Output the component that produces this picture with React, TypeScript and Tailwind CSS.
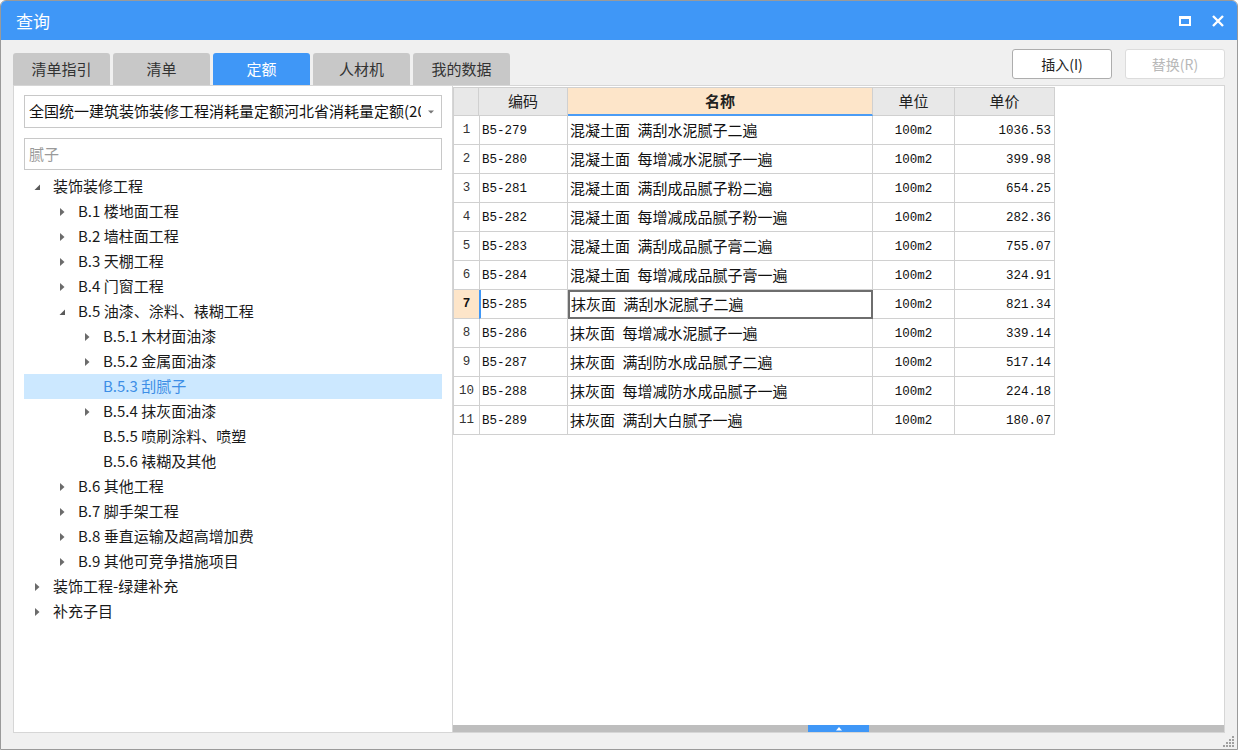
import React from 'react';

const cjk = { fontFamily: '"Noto Sans CJK SC", "Noto Sans", sans-serif' };
const mono = { fontFamily: '"Liberation Mono", "Noto Sans CJK SC", monospace' };

type Node = { label: string; level: number; arrow: 'open' | 'closed' | 'none'; selected?: boolean };

const tree: Node[] = [
  { label: '装饰装修工程', level: 0, arrow: 'open' },
  { label: 'B.1 楼地面工程', level: 1, arrow: 'closed' },
  { label: 'B.2 墙柱面工程', level: 1, arrow: 'closed' },
  { label: 'B.3 天棚工程', level: 1, arrow: 'closed' },
  { label: 'B.4 门窗工程', level: 1, arrow: 'closed' },
  { label: 'B.5 油漆、涂料、裱糊工程', level: 1, arrow: 'open' },
  { label: 'B.5.1 木材面油漆', level: 2, arrow: 'closed' },
  { label: 'B.5.2 金属面油漆', level: 2, arrow: 'closed' },
  { label: 'B.5.3 刮腻子', level: 2, arrow: 'none', selected: true },
  { label: 'B.5.4 抹灰面油漆', level: 2, arrow: 'closed' },
  { label: 'B.5.5 喷刷涂料、喷塑', level: 2, arrow: 'none' },
  { label: 'B.5.6 裱糊及其他', level: 2, arrow: 'none' },
  { label: 'B.6 其他工程', level: 1, arrow: 'closed' },
  { label: 'B.7 脚手架工程', level: 1, arrow: 'closed' },
  { label: 'B.8 垂直运输及超高增加费', level: 1, arrow: 'closed' },
  { label: 'B.9 其他可竞争措施项目', level: 1, arrow: 'closed' },
  { label: '装饰工程-绿建补充', level: 0, arrow: 'closed' },
  { label: '补充子目', level: 0, arrow: 'closed' },
];

const indent = ['pl-0', 'pl-[25px]', 'pl-[50px]'];

const rows = [
  ['B5-279', '混凝土面\u2002满刮水泥腻子二遍', '1036.53'],
  ['B5-280', '混凝土面\u2002每增减水泥腻子一遍', '399.98'],
  ['B5-281', '混凝土面\u2002满刮成品腻子粉二遍', '654.25'],
  ['B5-282', '混凝土面\u2002每增减成品腻子粉一遍', '282.36'],
  ['B5-283', '混凝土面\u2002满刮成品腻子膏二遍', '755.07'],
  ['B5-284', '混凝土面\u2002每增减成品腻子膏一遍', '324.91'],
  ['B5-285', '抹灰面\u2002满刮水泥腻子二遍', '821.34'],
  ['B5-286', '抹灰面\u2002每增减水泥腻子一遍', '339.14'],
  ['B5-287', '抹灰面\u2002满刮防水成品腻子二遍', '517.14'],
  ['B5-288', '抹灰面\u2002每增减防水成品腻子一遍', '224.18'],
  ['B5-289', '抹灰面\u2002满刮大白腻子一遍', '180.07'],
];

function Arrow({ kind }: { kind: Node['arrow'] }) {
  if (kind === 'closed')
    return (
      <svg width="8" height="10" viewBox="0 0 8 10">
        <path d="M2 1 L6.5 5 L2 9 Z" fill="#6b6b6b" />
      </svg>
    );
  if (kind === 'open')
    return (
      <svg width="8" height="10" viewBox="0 0 8 10">
        <path d="M7 2.5 L7 8 L1.5 8 Z" fill="#5a5a5a" />
      </svg>
    );
  return <span className="w-[8px]" />;
}

function Tab({ label, active }: { label: string; active?: boolean }) {
  return (
    <div
      className={
        active
          ? 'w-[97px] h-[32px] flex items-center justify-center rounded-t-[3px] bg-[#3f97f7] text-white text-[15px]'
          : 'w-[97px] h-[32px] flex items-center justify-center rounded-t-[3px] bg-[#c8c8c8] text-[#333] text-[15px]'
      }
    >
      {label}
    </div>
  );
}

export default function App() {
  return (
    <div
      className="w-[1238px] h-[750px] flex flex-col bg-[#f0f0f0] border border-[#9a9a9a] rounded-t-[6px] overflow-hidden"
      style={cjk}
    >
      {/* title bar */}
      <div className="h-[39px] shrink-0 bg-[#3f97f7] flex items-center pl-[15px] pr-[10px]">
        <span className="text-white text-[17px]">查询</span>
        <div className="ml-auto flex items-center gap-[20px]">
          <div className="w-[12px] h-[10px] border-2 border-t-[3px] border-white" />
          <svg width="14" height="14" viewBox="0 0 14 14" className="mr-[2px]">
            <path d="M2 2 L12 12 M12 2 L2 12" stroke="white" strokeWidth="2.4" />
          </svg>
        </div>
      </div>

      {/* tab row */}
      <div className="mt-[9px] h-[36px] shrink-0 flex items-end pl-[12px] pr-[12px]">
        <div className="flex gap-[3px]">
          <Tab label="清单指引" />
          <Tab label="清单" />
          <Tab label="定额" active />
          <Tab label="人材机" />
          <Tab label="我的数据" />
        </div>
        <div className="ml-auto self-start flex gap-[13px]">
          <div className="w-[100px] h-[30px] bg-white border border-[#adadad] rounded-[3px] flex items-center justify-center text-[14px] text-[#222]">
            插入(I)
          </div>
          <div className="w-[100px] h-[30px] bg-white border border-[#dcdcdc] rounded-[3px] flex items-center justify-center text-[14px] text-[#b8b8b8]">
            替换(R)
          </div>
        </div>
      </div>

      {/* main */}
      <div className="h-[648px] shrink-0 mx-[12px] flex">
        {/* left */}
        <div className="w-[440px] bg-white border border-[#d6d6d6] flex flex-col px-[10px] pt-[9px]">
          <div className="h-[33px] border border-[#c8c8c8] flex items-center pl-[4px] pr-[6px] overflow-hidden">
            <span className="text-[15px] text-[#111] whitespace-nowrap overflow-hidden w-[392px]">
              全国统一建筑装饰装修工程消耗量定额河北省消耗量定额(20
            </span>
            <svg width="8" height="6" viewBox="0 0 8 6" className="ml-auto">
              <path d="M1 1.5 L7 1.5 L4 4.5 Z" fill="#777" />
            </svg>
          </div>
          <div className="mt-[10px] h-[32px] border border-[#c8c8c8] flex items-center pl-[4px]">
            <span className="text-[15px] text-[#9a9a9a]">腻子</span>
          </div>
          <div className="mt-[4px] flex flex-col">
            {tree.map((n, i) => (
              <div
                key={i}
                className={
                  n.selected
                    ? 'h-[25px] flex items-center bg-[#cce8ff] text-[#3d8ee6]'
                    : 'h-[25px] flex items-center text-[#1a1a1a]'
                }
              >
                <div className={`${indent[n.level]} flex items-center`}>
                  <span className="w-[8px] ml-[9px] flex items-center">
                    <Arrow kind={n.arrow} />
                  </span>
                  <span className="ml-[12px] text-[15px] whitespace-nowrap">{n.label}</span>
                </div>
              </div>
            ))}
          </div>
        </div>

        {/* right */}
        <div className="flex-1 bg-white border border-l-0 border-[#d6d6d6] flex flex-col">
          <div className="pt-[1px] flex-1">
            <div className="flex h-[29px] text-[15px] text-[#222]">
              <div className="w-[26px] bg-[#e8e8e8] border border-[#d0d0d0]" />
              <div className="w-[89px] bg-[#e8e8e8] border border-l-0 border-[#d0d0d0] flex items-center justify-center">编码</div>
              <div className="w-[305px] bg-[#fde5c9] border-t border-r border-[#d0d0d0] border-b-[2px] border-b-[#4b9cf5] flex items-center justify-center font-bold">名称</div>
              <div className="w-[82px] bg-[#e8e8e8] border border-l-0 border-[#d0d0d0] flex items-center justify-center">单位</div>
              <div className="w-[100px] bg-[#e8e8e8] border border-l-0 border-[#d0d0d0] flex items-center justify-center">单价</div>
            </div>
            {rows.map((r, i) => {
              const sel = i === 6;
              return (
                <div key={i} className="flex h-[29px] text-[#111]">
                  <div
                    className={
                      sel
                        ? 'w-[26px] bg-[#fde5c9] border-l border-b border-[#d0d0d0] flex items-center justify-center pt-[1px] text-[12.5px] font-bold'
                        : 'w-[26px] border-l border-b border-[#d0d0d0] flex items-center justify-center pt-[1px] text-[12.5px] text-[#333]'
                    }
                    style={mono}
                  >
                    {i + 1}
                  </div>
                  <div
                    className={
                      sel
                        ? 'w-[89px] border-l-2 border-l-[#3f97f7] border-b border-r border-[#d0d0d0] flex items-center pl-[1px] pt-[2px] text-[12.5px]'
                        : 'w-[89px] border-l border-b border-r border-[#d0d0d0] flex items-center pl-[2px] pt-[2px] text-[12.5px]'
                    }
                    style={mono}
                  >
                    {r[0]}
                  </div>
                  <div
                    className={
                      sel
                        ? 'w-[305px] border-2 border-[#6e6e6e] flex items-center pl-[1px] text-[15px] whitespace-pre'
                        : 'w-[305px] border-b border-r border-[#d0d0d0] flex items-center pl-[2px] text-[15px] whitespace-pre'
                    }
                  >
                    {r[1]}
                  </div>
                  <div
                    className="w-[82px] border-b border-r border-[#d0d0d0] flex items-center justify-center pt-[2px] text-[12.5px]"
                    style={mono}
                  >
                    100m2
                  </div>
                  <div
                    className="w-[100px] border-b border-r border-[#d0d0d0] flex items-center justify-end pr-[3px] pt-[2px] text-[12.5px]"
                    style={mono}
                  >
                    {r[2]}
                  </div>
                </div>
              );
            })}
          </div>
          {/* scrollbar */}
          <div className="h-[7px] bg-[#bebebe] flex">
            <div className="ml-[355px] w-[61px] h-full bg-[#3f97f7] flex items-center justify-center">
              <svg width="8" height="5" viewBox="0 0 8 5">
                <path d="M1 4.5 L4 1 L7 4.5 Z" fill="white" />
              </svg>
            </div>
          </div>
        </div>
      </div>

      {/* resize grip */}
      <div className="flex-1 flex justify-end items-end pr-[2px] pb-[2px]">
        <svg width="12" height="12" viewBox="0 0 12 12">
          <g fill="#a0a0a0">
            <rect x="9" y="1" width="2" height="2" />
            <rect x="6" y="4" width="2" height="2" />
            <rect x="9" y="4" width="2" height="2" />
            <rect x="3" y="7" width="2" height="2" />
            <rect x="6" y="7" width="2" height="2" />
            <rect x="9" y="7" width="2" height="2" />
            <rect x="0" y="10" width="2" height="2" />
            <rect x="3" y="10" width="2" height="2" />
            <rect x="6" y="10" width="2" height="2" />
            <rect x="9" y="10" width="2" height="2" />
          </g>
        </svg>
      </div>
    </div>
  );
}
